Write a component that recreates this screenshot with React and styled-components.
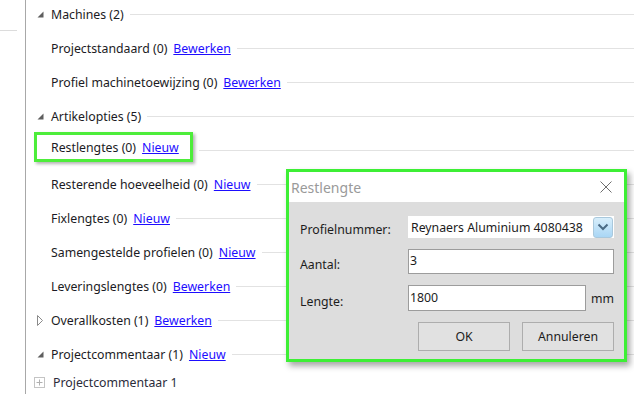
import React from 'react';
import styled, { createGlobalStyle } from 'styled-components';

const GlobalStyle = createGlobalStyle`
    body {
        margin: 0;
        font-family: "Noto Sans", "Open Sans", sans-serif;
        background: #ffffff;
        overflow: hidden;
    }
`;

const Page = styled.div`
    display: flex;
    height: 394px;
    position: relative;
    overflow: hidden;
`;

const LeftStrip = styled.div`
    width: 25px;
    border-right: 1px solid #a8a8a8;
    flex-shrink: 0;
`;

const StripLine = styled.div`
    margin-top: 30px;
    width: 17px;
    border-top: 1px solid #dcdcdc;
`;

const Tree = styled.div`
    flex: 1;
    margin-top: -3px;
    display: flex;
    flex-direction: column;
`;

const Row = styled.div`
    display: flex;
    align-items: center;
    height: 34px;
    padding-left: ${p => (p.$top ? '11px' : '25px')};
    font-size: 12.3px;
    color: #1b1b24;
    white-space: nowrap;
`;

const Toggle = styled.span`
    width: 14px;
    display: flex;
    align-items: center;
`;

const Item = styled.span`
    display: flex;
    align-items: center;
    gap: 6px;
    ${p => p.$marked && `
        margin-left: -17px;
        margin-bottom: 6px;
        padding: 0 11px 0 14px;
        height: 24px;
        border: 3px solid #4ded3a;
        box-shadow: 2px 2px 3px rgba(0, 0, 0, 0.3);
    `}
`;

const TextLink = styled.a`
    color: #1d0dff;
    text-decoration: underline;
    cursor: pointer;
`;

const Rule = styled.span`
    flex: 1;
    height: 1px;
    background: #e2e2e2;
    margin-left: 6px;
`;

const LeafRow = styled.div`
    display: flex;
    align-items: center;
    height: 22px;
    padding-left: 8px;
    gap: 8px;
    font-size: 12.3px;
    color: #2b2b3a;
`;

const Dialog = styled.div`
    position: absolute;
    left: 286px;
    top: 169px;
    width: 335px;
    height: 187px;
    border: 3px solid #3def35;
    box-shadow: 3px 4px 6px rgba(0, 0, 0, 0.35);
    display: flex;
    flex-direction: column;
    background: #dddddd;
`;

const TitleBar = styled.div`
    height: 30px;
    background: #ffffff;
    display: flex;
    align-items: center;
    justify-content: space-between;
    padding: 0 12px 0 2px;
    font-size: 14px;
    color: #9a9a9a;
`;

const Form = styled.div`
    display: grid;
    grid-template-columns: 108px 178px 1fr;
    grid-template-rows: 22px 25px 26px 29px;
    row-gap: 11px;
    align-items: center;
    padding: 14px 11px 0 11px;
    font-size: 12.3px;
    color: #1c1c1c;
`;

const Label = styled.span`
    padding-top: ${p => p.$drop || 0};
`;

const Select = styled.div`
    grid-column: 2 / 4;
    height: 22px;
    background: #ffffff;
    display: flex;
    align-items: center;
    justify-content: space-between;
    padding-left: 3px;
    padding-right: 1px;
`;

const SelectButton = styled.span`
    width: 18px;
    height: 19px;
    border: 1px solid #a9c8dc;
    border-radius: 3px;
    background: linear-gradient(#d8eefb, #a9d6f5);
    display: flex;
    align-items: center;
    justify-content: center;
`;

const Input = styled.div`
    grid-column: ${p => (p.$wide ? '2 / 4' : '2 / 3')};
    height: 100%;
    box-sizing: border-box;
    border: 1px solid #9c9c9c;
    background: #ffffff;
    display: flex;
    align-items: center;
    padding: 0 0 2px 1px;
`;

const Unit = styled.span`
    padding-left: 5px;
`;

const Buttons = styled.div`
    grid-column: 2 / 4;
    display: flex;
    justify-content: flex-end;
    gap: 12px;
    height: 29px;
`;

const Button = styled.button`
    width: 92px;
    height: 29px;
    border: 1px solid #adadad;
    background: #e1e1e1;
    font-family: inherit;
    font-size: 12.3px;
    color: #1c1c1c;
    padding: 0;
`;

const Expanded = () => (
    <svg width="7" height="7" viewBox="0 0 7 7">
        <polygon points="6.5,0.5 6.5,6.5 0.5,6.5" fill="#5e5e5e" />
    </svg>
);

const Collapsed = () => (
    <svg width="7" height="11" viewBox="0 0 7 11">
        <polygon points="0.5,0.5 5.5,5.5 0.5,10.5" fill="#ffffff" stroke="#8a8a8a" />
    </svg>
);

const PlusBox = () => (
    <svg width="11" height="11" viewBox="0 0 11 11">
        <rect x="0.5" y="0.5" width="10" height="10" fill="none" stroke="#c4c4c4" />
        <path d="M2.5 5.5 H8.5 M5.5 2.5 V8.5" stroke="#b0b0b0" />
    </svg>
);

const CloseIcon = () => (
    <svg width="12" height="12" viewBox="0 0 12 12">
        <path d="M0.5 0.5 L11.5 11.5 M11.5 0.5 L0.5 11.5" stroke="#6e6e6e" strokeWidth="1" />
    </svg>
);

const Chevron = () => (
    <svg width="12" height="8" viewBox="0 0 12 8">
        <path d="M1.5 1.5 L6 6 L10.5 1.5" fill="none" stroke="#4b6b85" strokeWidth="2" />
    </svg>
);

const rows = [
    { top: true, open: true, text: 'Machines (2)' },
    { text: 'Projectstandaard (0)', link: 'Bewerken' },
    { text: 'Profiel machinetoewijzing (0)', link: 'Bewerken' },
    { top: true, open: true, text: 'Artikelopties (5)' },
    { text: 'Restlengtes (0)', link: 'Nieuw', marked: true },
    { text: 'Resterende hoeveelheid (0)', link: 'Nieuw' },
    { text: 'Fixlengtes (0)', link: 'Nieuw' },
    { text: 'Samengestelde profielen (0)', link: 'Nieuw' },
    { text: 'Leveringslengtes (0)', link: 'Bewerken' },
    { top: true, open: false, text: 'Overallkosten (1)', link: 'Bewerken' },
    { top: true, open: true, text: 'Projectcommentaar (1)', link: 'Nieuw' },
];

function App() {
    return (
        <Page>
            <GlobalStyle />
            <LeftStrip>
                <StripLine />
            </LeftStrip>
            <Tree>
                {rows.map(r => (
                    <Row key={r.text} $top={r.top}>
                        {r.top && <Toggle>{r.open ? <Expanded /> : <Collapsed />}</Toggle>}
                        <Item $marked={r.marked}>
                            <span>{r.text}</span>
                            {r.link && <TextLink>{r.link}</TextLink>}
                        </Item>
                        <Rule />
                    </Row>
                ))}
                <LeafRow>
                    <PlusBox />
                    <span>Projectcommentaar 1</span>
                </LeafRow>
            </Tree>
            <Dialog>
                <TitleBar>
                    <span>Restlengte</span>
                    <CloseIcon />
                </TitleBar>
                <Form>
                    <Label $drop="4px">Profielnummer:</Label>
                    <Select>
                        <span>Reynaers Aluminium 4080438</span>
                        <SelectButton><Chevron /></SelectButton>
                    </Select>
                    <Label $drop="5px">Aantal:</Label>
                    <Input $wide>3</Input>
                    <Label $drop="6px">Lengte:</Label>
                    <Input>1800</Input>
                    <Unit>mm</Unit>
                    <span />
                    <Buttons>
                        <Button>OK</Button>
                        <Button>Annuleren</Button>
                    </Buttons>
                </Form>
            </Dialog>
        </Page>
    );
}

export default App;
